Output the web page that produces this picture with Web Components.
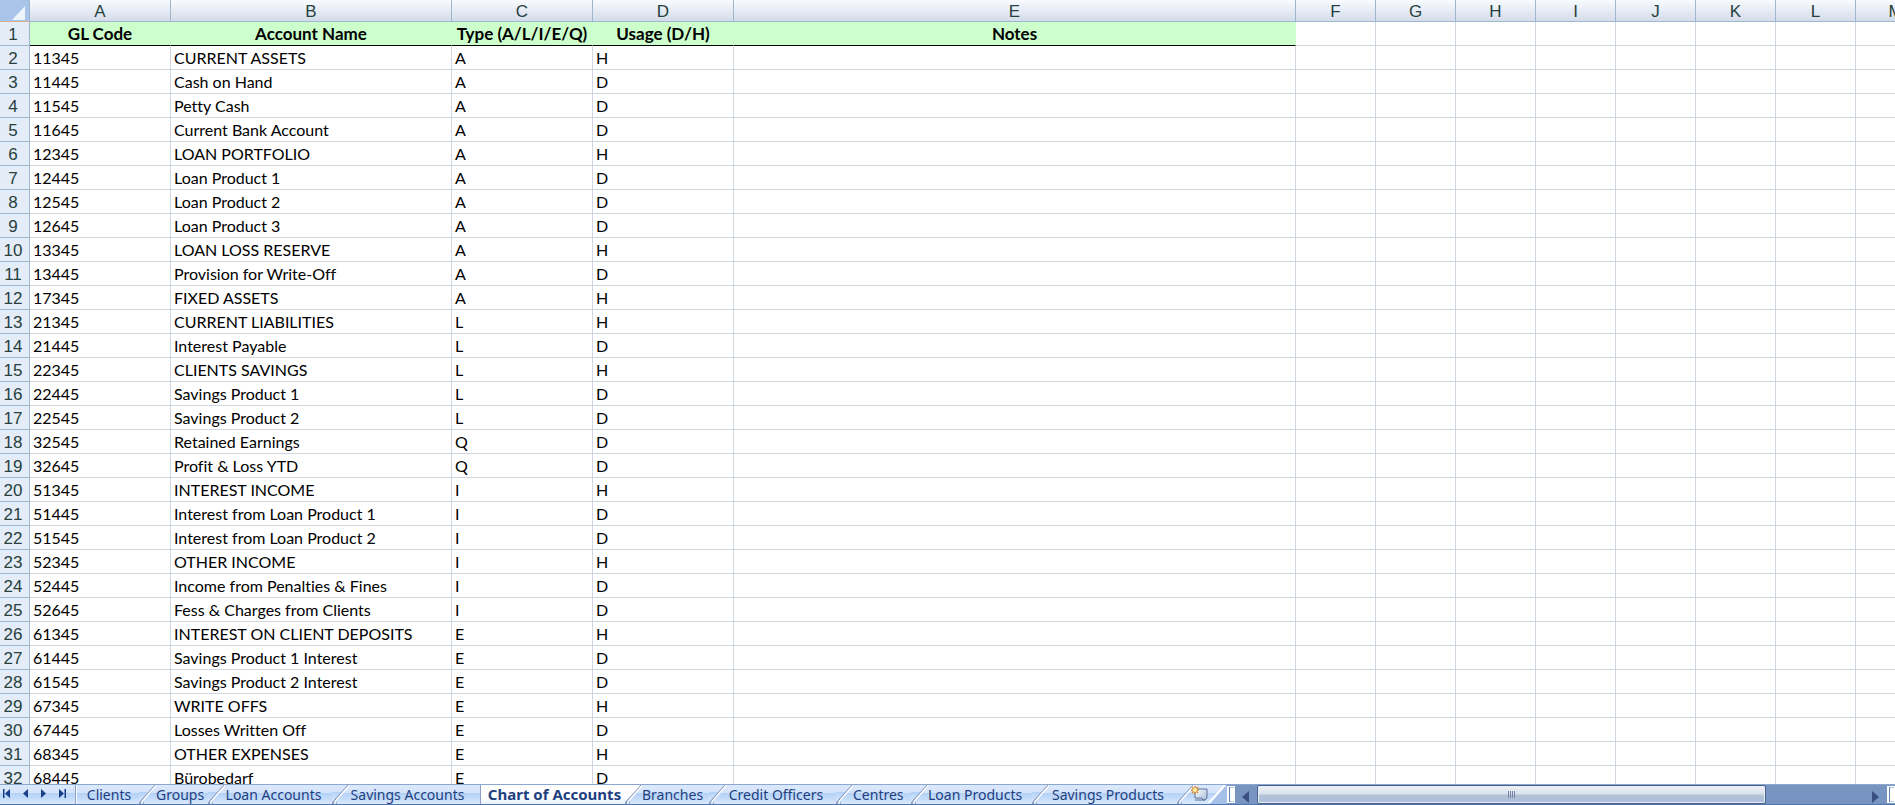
<!DOCTYPE html>
<html lang="en">
<head>
<meta charset="utf-8">
<title>Chart of Accounts</title>
<style>
html, body { margin: 0; height: 100%; overflow: hidden; background: #fff; font-family: "Liberation Sans", Arial, sans-serif; }
</style>
</head>
<body>
<sheet-app></sheet-app>
<script>
const ROWS = `11345|CURRENT ASSETS|A|H
11445|Cash on Hand|A|D
11545|Petty Cash|A|D
11645|Current Bank Account|A|D
12345|LOAN PORTFOLIO|A|H
12445|Loan Product 1|A|D
12545|Loan Product 2|A|D
12645|Loan Product 3|A|D
13345|LOAN LOSS RESERVE|A|H
13445|Provision for Write-Off|A|D
17345|FIXED ASSETS|A|H
21345|CURRENT LIABILITIES|L|H
21445|Interest Payable|L|D
22345|CLIENTS SAVINGS|L|H
22445|Savings Product 1|L|D
22545|Savings Product 2|L|D
32545|Retained Earnings|Q|D
32645|Profit &amp; Loss YTD|Q|D
51345|INTEREST INCOME|I|H
51445|Interest from Loan Product 1|I|D
51545|Interest from Loan Product 2|I|D
52345|OTHER INCOME|I|H
52445|Income from Penalties &amp; Fines|I|D
52645|Fess &amp; Charges from Clients|I|D
61345|INTEREST ON CLIENT DEPOSITS|E|H
61445|Savings Product 1 Interest|E|D
61545|Savings Product 2 Interest|E|D
67345|WRITE OFFS|E|H
67445|Losses Written Off|E|D
68345|OTHER EXPENSES|E|H
68445|Bürobedarf|E|D`.split('\n').map(r => r.split('|'));
const HEADINGS = ['GL Code', 'Account Name', 'Type (A/L/I/E/Q)', 'Usage (D/H)', 'Notes'];
const WIDTHS = [141, 281, 141, 141, 562, 80, 80, 80, 80, 80, 80, 80, 80];
const LETTERS = [...'ABCDEFGHIJKLM'];

class SheetGrid extends HTMLElement {
  connectedCallback() {
    const blanks = n => '<td></td>'.repeat(n);
    this.attachShadow({ mode: 'open' }).innerHTML = `
<style>
:host { display: block; overflow: hidden; background: #fff; }
table { border-collapse: separate; border-spacing: 0; table-layout: fixed; width: ${WIDTHS.reduce((a, b) => a + b, 30)}px; }
th, td { box-sizing: border-box; padding: 0; height: 24px; line-height: 22px; white-space: nowrap; overflow: hidden; }
td { padding: 1px 0 0 3px; border-right: 1px solid #d0d7e0; border-bottom: 1px solid #d0d7e0; font: 16px/22px Lato, Carlito, sans-serif; font-variant-ligatures: none; color: #000; }
thead th { height: 22px; padding-top: 2px; line-height: 19px; font-size: 17px; font-weight: 400; color: #27413e;
  background: linear-gradient(#f8fbfe, #e6ecf5 50%, #d4dce9); border-right: 1px solid #9eb6ce; border-bottom: 1px solid #9eb6ce; }
tbody th { padding: 2px 3px 0 0; line-height: 21px; font-size: 17px; font-weight: 400; color: #27413e; text-align: center;
  background: #e4ecf7; border-right: 1px solid #9eb6ce; border-bottom: 1px solid #9eb6ce; }
thead th.corner { padding: 0; background: #a9c4e9; border-bottom-color: #d8b08c; }
.corner svg { display: block; margin: 4px 4px 0 auto; }
.head td { padding: 1px 0 0; text-align: center; font-size: 17px; font-weight: 700; background: #cfc; border-right-color: #cfc; border-bottom-color: #000; }
.head td:nth-child(n+7) { background: #fff; border-color: #d0d7e0; }
</style>
<table>
<colgroup><col style="width:30px">${WIDTHS.map(w => `<col style="width:${w}px">`).join('')}</colgroup>
<thead><tr><th class="corner" aria-label="Select all"><svg width="13" height="14" viewBox="0 0 13 14"><path d="M13 0V14H0Z" fill="#eef4fc"/></svg></th>${LETTERS.map(l => `<th scope="col">${l}</th>`).join('')}</tr></thead>
<tbody>
<tr class="head"><th scope="row">1</th>${HEADINGS.map(h => `<td>${h}</td>`).join('')}${blanks(8)}</tr>
${ROWS.map((r, i) => `<tr><th scope="row">${i + 2}</th>${r.map(c => `<td>${c}</td>`).join('')}${blanks(9)}</tr>`).join('')}
</tbody>
</table>`;
  }
}

class SheetTab extends HTMLElement {
  connectedCallback() {
    const plain = this.hasAttribute('first') || this.hasAttribute('active');
    const left = this.hasAttribute('after-active') ? '#fff' : 'url(#g)';
    this.attachShadow({ mode: 'open' }).innerHTML = `
<style>
:host { display: flex; flex: none; }
button { display: flex; width: 100%; height: 19px; margin: 0; padding: 0; border: 0; font: 14px/20px "Noto Sans", "Open Sans", sans-serif; color: #1f4080; cursor: pointer;
  background: linear-gradient(#dce9fb, #d3e3fa 40%, #b4d2f7 44%, #c6ddfa 75%, #dceafd); }
svg { display: block; flex: none; }
.label { flex: 1; height: 19px; padding-right: 10px; white-space: nowrap; text-align: center; }
.plain { padding: 0 0 0 3px; border-left: 1px solid #8ba0c4; box-sizing: border-box; }
:host([active]) button { background: linear-gradient(#fff 60%, #e9f1fc); font-size: 15px; line-height: 19px; font-weight: 700; }
:host([first]) .plain { box-shadow: inset 1px 0 #fff; }
:host([before-active]) .label { padding-right: 14px; }
</style>
<button type="button" role="tab" aria-selected="${this.hasAttribute('active')}">
${plain ? '' : `<svg width="17" height="19" viewBox="0 0 17 19"><defs><linearGradient id="g" x2="0" y2="1"><stop offset="0" stop-color="#dce9fb"/><stop offset=".4" stop-color="#d3e3fa"/><stop offset=".44" stop-color="#b4d2f7"/><stop offset="1" stop-color="#dceafd"/></linearGradient></defs><path d="M0 0H16L0 17Z" fill="${left}"/><path d="M0 19V18L4 13L5 19Z" fill="#8fa8d0"/><path d="M17 0.500L3 16.500V19" fill="none" stroke="#fff" stroke-width="1.500"/><path d="M16 0L0 18" fill="none" stroke="#8193b8"/></svg>`}
<span class="label${plain ? ' plain' : ''}"><slot></slot></span></button>`;
  }
}

class SheetTabs extends HTMLElement {
  connectedCallback() {
    const tabs = [['Clients', 64, 'first'], ['Groups', 69], ['Loan Accounts', 124], ['Savings Accounts', 148, 'before-active'], ['Chart of Accounts', 145, 'active'],
      ['Branches', 84, 'after-active'], ['Credit Officers', 127], ['Centres', 75], ['Loan Products', 121], ['Savings Products', 145]];
    const nav = (name, d) => `<button type="button" class="nav" aria-label="${name}"><svg width="9" height="10" viewBox="0 0 9 10"><path d="${d}" fill="#173f8c"/></svg></button>`;
    this.attachShadow({ mode: 'open' }).innerHTML = `
<style>
:host { display: flex; }
.navs { display: flex; box-sizing: border-box; width: 75px; padding: 0 0 0 2px; background: linear-gradient(#dce9fb, #d3e3fa 40%, #b4d2f7 44%, #c6ddfa 75%, #dceafd); }
.nav { display: flex; flex: none; width: 18px; height: 18px; padding: 4px 0 0 1px; margin: 0; border: 0; background: none; }
.list { display: flex; }
</style>
<div class="navs">${nav('First sheet', 'M0 0H1.500V9H0ZM7 0V9L2 4.500Z')}${nav('Previous sheet', 'M7 0V9L2 4.500Z')}${nav('Next sheet', 'M2 0V9L7 4.500Z')}${nav('Last sheet', 'M2 0V9L7 4.500ZM7.500 0H9V9H7.500Z')}</div>
<div class="list" role="tablist">
${tabs.map(([t, w, a]) => `<sheet-tab style="width:${w}px" ${a || ''}>${t}</sheet-tab>`).join('')}
<sheet-new></sheet-new>
</div>`;
  }
}

class SheetNew extends HTMLElement {
  connectedCallback() {
    this.attachShadow({ mode: 'open' }).innerHTML = `
<style>
:host { display: flex; }
button { display: flex; padding: 0; margin: 0; border: 0; background: #a5c1e8; }
svg { display: block; }
</style>
<button type="button" aria-label="Insert worksheet"><svg width="50" height="19" viewBox="0 0 50 19">
<defs><linearGradient id="g" x2="0" y2="1"><stop offset="0" stop-color="#dce9fb"/><stop offset=".4" stop-color="#d3e3fa"/><stop offset=".44" stop-color="#b4d2f7"/><stop offset="1" stop-color="#dceafd"/></linearGradient>
<linearGradient id="p" x2="1" y2="1"><stop offset="0" stop-color="#fff"/><stop offset="1" stop-color="#a9bbd8"/></linearGradient></defs>
<path d="M0 0H49L32 19H0Z" fill="url(#g)"/><path d="M0 19V18L4 13L5 19Z" fill="#8fa8d0"/>
<path d="M17 .5L3 16.500V19" fill="none" stroke="#fff" stroke-width="1.500"/><path d="M16 0L0 18" fill="none" stroke="#8193b8"/>
<path d="M48 0L32 18" stroke="#fff" stroke-width="2"/>
<path d="M18 4H30V13L28 15H26L25 13H18Z" fill="url(#p)" stroke="#5e7096"/><path d="M18 15H28L30 13" fill="none" stroke="#5e7096"/>
<path d="M18 1V9M14 5H22M15 2L21 8M21 2L15 8" stroke="#d8871c" stroke-width="1.300"/><circle cx="18" cy="5" r="2" fill="#fff0a8"/>
</svg></button>`;
  }
}

class SheetScrollbar extends HTMLElement {
  connectedCallback() {
    this.attachShadow({ mode: 'open' }).innerHTML = `
<style>
:host { display: flex; background: #7795c0; }
.split { flex: none; box-sizing: border-box; width: 8px; height: 17px; margin-top: 1px; border: 1px solid #fff; border-width: 1px 1px 1px 2px; background: #fff; box-shadow: inset 1px 0 #5f7fae, inset 0 1px #b9cbe4, inset 0 -1px #b9cbe4; }
button { flex: none; width: 22px; height: 19px; padding: 4px 0 0 7px; margin: 0; border: 0; background: none; }
.right { width: 24px; padding-left: 9px; }
svg { display: block; }
.track { flex: 1; display: flex; }
.thumb { display: flex; justify-content: center; align-items: center; box-sizing: border-box; width: 84%; height: 19px; border: 1px solid #4a648f; border-radius: 2px; box-shadow: inset 0 0 0 1px #e8edf5;
  background: linear-gradient(#f0f3f8, #d9e0ea 48%, #b4c2d6 52%, #aebfdc); }
</style>
<div class="split"></div>
<button type="button" aria-label="Scroll left"><svg width="8" height="12" viewBox="0 0 8 12"><path d="M7 0V12L0 6Z" fill="#3a5080"/></svg></button>
<div class="track"><div class="thumb"><svg width="8" height="7" viewBox="0 0 8 7"><path d="M.5 0V7M2.500 0V7M4.500 0V7M6.500 0V7" stroke="#7787a3"/></svg></div></div>
<button type="button" class="right" aria-label="Scroll right"><svg width="8" height="12" viewBox="0 0 8 12"><path d="M0 0V12L7 6Z" fill="#3a5080"/></svg></button>
<div class="split"></div>`;
  }
}

class SheetApp extends HTMLElement {
  connectedCallback() {
    this.attachShadow({ mode: 'open' }).innerHTML = `
<style>
:host { display: flex; flex-direction: column; height: 100vh; }
sheet-grid { flex: 1; min-height: 0; }
footer { display: flex; flex: none; box-sizing: border-box; height: 21px; border-top: 1px solid #8ba6cf; border-bottom: 1px solid #4e75ae; background: #7795c0; }
sheet-tabs { flex: none; }
sheet-scrollbar { flex: 1; }
</style>
<sheet-grid></sheet-grid>
<footer><sheet-tabs></sheet-tabs><sheet-scrollbar></sheet-scrollbar></footer>`;
  }
}
customElements.define('sheet-grid', SheetGrid);
customElements.define('sheet-tab', SheetTab);
customElements.define('sheet-new', SheetNew);
customElements.define('sheet-tabs', SheetTabs);
customElements.define('sheet-scrollbar', SheetScrollbar);
customElements.define('sheet-app', SheetApp);
</script>
</body>
</html>
